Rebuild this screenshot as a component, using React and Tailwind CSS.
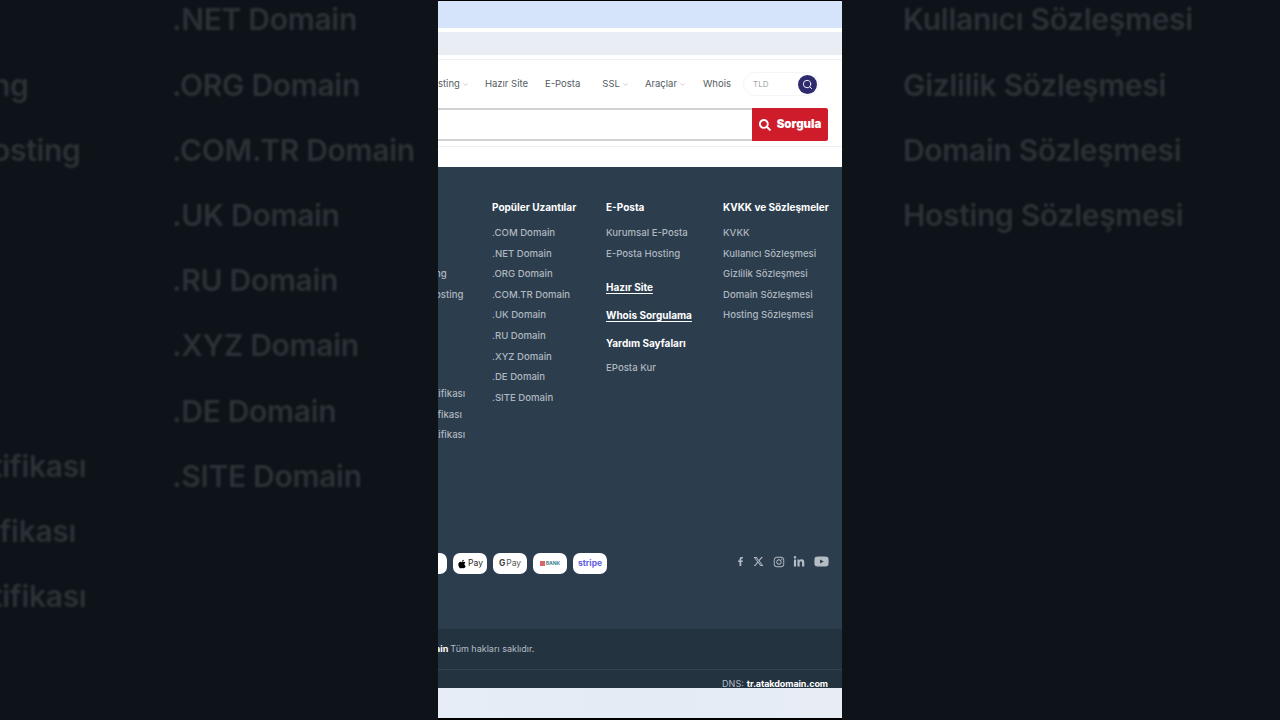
import { ChevronDown, Search } from 'lucide-react'
import { FaApple, FaFacebookF, FaInstagram, FaLinkedinIn, FaSearch, FaYoutube } from 'react-icons/fa'
import { FaXTwitter } from 'react-icons/fa6'

const font = "font-['Inter','Liberation_Sans',sans-serif]"

const domains = ['.COM Domain', '.NET Domain', '.ORG Domain', '.COM.TR Domain', '.UK Domain', '.RU Domain', '.XYZ Domain', '.DE Domain', '.SITE Domain']
const legal = ['KVKK', 'Kullanıcı Sözleşmesi', 'Gizlilik Sözleşmesi', 'Domain Sözleşmesi', 'Hosting Sözleşmesi']

const BlurRow = ({ children }) => (
  <div className="h-[65.2px] leading-[65.2px] text-[30px] font-semibold text-[#2d3238] whitespace-nowrap blur-[1px] tracking-[-0.3px]">
    {children}
  </div>
)

const FooterLink = ({ children }) => (
  <div className="h-[20.6px] leading-[20.6px] text-[9.6px] font-medium text-[#aeb7bf] whitespace-nowrap">{children}</div>
)

const FooterHead = ({ children, underline }) => (
  <div className={`text-[10px] leading-[20px] font-bold text-white whitespace-nowrap ${underline ? 'underline underline-offset-2' : ''}`}>
    {children}
  </div>
)

const NavItem = ({ children, caret, className }) => (
  <div className={`flex items-center gap-[2px] text-[9.5px] text-[#555b62] whitespace-nowrap ${className}`}>
    {children}
    {caret && <ChevronDown size={7} className="text-[#aaa]" />}
  </div>
)

const Pill = ({ children, className = '' }) => (
  <div className={`h-[21px] w-[34px] rounded-[7px] bg-white flex items-center justify-center shrink-0 ${className}`}>
    {children}
  </div>
)

export default function App() {
  return (
    <div className={`h-[720px] w-[1280px] flex overflow-hidden bg-[#0d1318] ${font}`}>
      {/* blurred left backdrop */}
      <div className="w-[438px] shrink-0 overflow-hidden flex -mt-[12.6px]">
        <div className="w-[172px] shrink-0 flex flex-col -ml-[8px] mr-[8px]">
          <BlurRow />
          <BlurRow>ng</BlurRow>
          <BlurRow>osting</BlurRow>
          <BlurRow />
          <BlurRow />
          <BlurRow />
          <BlurRow />
          <div className="-mt-[10px]"><BlurRow>tifikası</BlurRow></div>
          <BlurRow>ifikası</BlurRow>
          <BlurRow>tifikası</BlurRow>
        </div>
        <div className="flex flex-col">
          {domains.slice(1).map((d) => <BlurRow key={d}>{d}</BlurRow>)}
        </div>
      </div>

      {/* center video */}
      <div className="w-[404px] shrink-0 h-full flex flex-col bg-white border-t border-b-2 border-black overflow-hidden">
        <div className="h-[27px] bg-[#d5e3fb] shrink-0" />
        <div className="h-[4px] shrink-0" />
        <div className="h-[23px] bg-[#e9eef5] shrink-0" />
        <div className="h-[5px] shrink-0 border-b border-[#eef0f3]" />

        <div className="h-[48px] flex items-center shrink-0">
          <NavItem caret>sting</NavItem>
          <NavItem className="ml-[16px]">Hazır Site</NavItem>
          <NavItem className="ml-[17px]">E-Posta</NavItem>
          <NavItem caret className="ml-[22px]">SSL</NavItem>
          <NavItem caret className="ml-[16px]">Araçlar</NavItem>
          <NavItem className="ml-[17px]">Whois</NavItem>
          <div className="ml-[12px] w-[76px] h-[24px] rounded-full border border-[#f4f5f7] flex items-center justify-between pl-[9px] pr-[1px]">
            <span className="text-[8px] text-[#a6a9ad]">TLD</span>
            <span className="w-[19px] h-[19px] rounded-full bg-[#2d2a6e] flex items-center justify-center">
              <Search size={11} className="text-white" />
            </span>
          </div>
        </div>

        <div className="h-[33px] flex shrink-0 pr-[14px]">
          <div className="flex-1 border-y-2 border-[#cfd1d3]" />
          <div className="w-[76px] bg-[#cf1c2a] rounded-r-[2px] flex items-center justify-center gap-[6px] text-white">
            <FaSearch size={12} />
            <span className="text-[11.5px] font-black">Sorgula</span>
          </div>
        </div>
        <div className="h-[6px] shrink-0 border-b border-[#eeeff1]" />
        <div className="h-[20px] shrink-0" />

        <div className="bg-[#2c3d4e] h-[462px] shrink-0 flex flex-col pt-[30px] pr-[14px]">
          <div className="flex h-[356px]">
            <div className="w-[54px] shrink-0 pt-[67px] -ml-[3px] mr-[3px]">
              <FooterLink>ng</FooterLink>
              <FooterLink>osting</FooterLink>
              <div className="h-[79px]" />
              <FooterLink>tifikası</FooterLink>
              <FooterLink>ifikası</FooterLink>
              <FooterLink>tifikası</FooterLink>
            </div>
            <div className="w-[114px] shrink-0">
              <FooterHead>Popüler Uzantılar</FooterHead>
              <div className="mt-[6px]">
                {domains.map((d) => <FooterLink key={d}>{d}</FooterLink>)}
              </div>
            </div>
            <div className="w-[117px] shrink-0">
              <FooterHead>E-Posta</FooterHead>
              <div className="mt-[6px]">
                <FooterLink>Kurumsal E-Posta</FooterLink>
                <FooterLink>E-Posta Hosting</FooterLink>
              </div>
              <div className="mt-[13px]"><FooterHead underline>Hazır Site</FooterHead></div>
              <div className="mt-[8px]"><FooterHead underline>Whois Sorgulama</FooterHead></div>
              <div className="mt-[8px]"><FooterHead>Yardım Sayfaları</FooterHead></div>
              <div className="mt-[5px]"><FooterLink>EPosta Kur</FooterLink></div>
            </div>
            <div>
              <FooterHead>KVKK ve Sözleşmeler</FooterHead>
              <div className="mt-[6px]">
                {legal.map((d) => <FooterLink key={d}>{d}</FooterLink>)}
              </div>
            </div>
          </div>

          <div className="flex items-center">
            <div className="flex gap-[6px] -ml-[25px]">
              <Pill />
              <Pill className="gap-[1px] text-[8.5px] text-[#222]">
                <FaApple size={10} className="text-black" />
                <span>Pay</span>
              </Pill>
              <Pill className="gap-[1px] text-[8.5px] text-[#555]">
                <span className="font-bold text-[#444]">G</span>
                <span>Pay</span>
              </Pill>
              <Pill className="gap-[1px]">
                <span className="w-[5px] h-[5px] bg-[#d9666b]" />
                <span className="text-[5px] font-bold text-[#3d7f8c]">BANK</span>
              </Pill>
              <Pill>
                <span className="text-[8.5px] font-bold text-[#6461e0]">stripe</span>
              </Pill>
            </div>
            <div className="ml-auto -mr-[1px] flex items-center text-[#b4bcc4] -mt-[4px]">
              <FaFacebookF size={9} />
              <FaXTwitter size={11} className="ml-[8px]" />
              <FaInstagram size={12} className="ml-[9px]" />
              <FaLinkedinIn size={12} className="ml-[8px]" />
              <FaYoutube size={15} className="ml-[9px]" />
            </div>
          </div>
        </div>

        <div className="bg-[#243340] h-[59px] shrink-0 flex flex-col text-[9px] leading-[10px] text-[#b4bcc4]">
          <div className="h-[41px] shrink-0 pb-[1px] flex items-center border-b border-[#33444f] whitespace-nowrap -ml-[3px]">
            <span className="font-bold text-white">ain</span>
            <span className="ml-[2px]">Tüm hakları saklıdır.</span>
          </div>
          <div className="flex justify-end pr-[14px] pt-[9px]">
            DNS:<span className="ml-[3px] font-bold text-white tracking-[-0.1px]">tr.atakdomain.com</span>
          </div>
        </div>

        <div className="flex-1 bg-gradient-to-r from-[#e6edf6] via-[#e3ebf5] to-[#e8edf5]" />
      </div>

      {/* blurred right backdrop */}
      <div className="w-[438px] shrink-0 overflow-hidden pl-[61px] -mt-[12.6px]">
        {legal.slice(1).map((d) => <BlurRow key={d}>{d}</BlurRow>)}
      </div>
    </div>
  )
}
